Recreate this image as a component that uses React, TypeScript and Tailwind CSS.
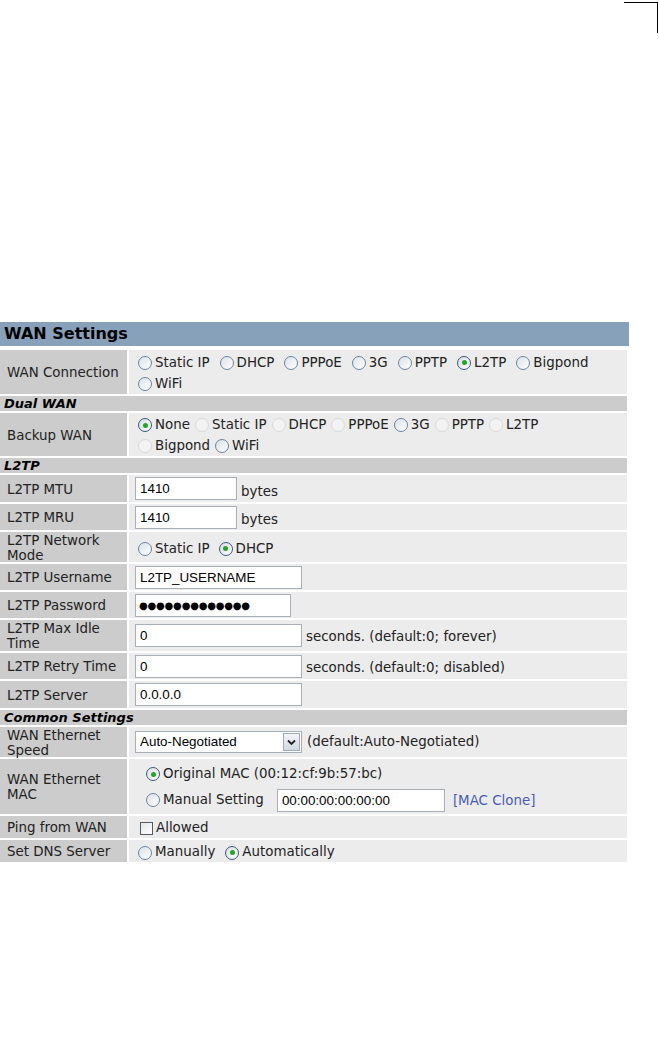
import React from 'react';

const Radio = ({ checked, disabled }: { checked?: boolean; disabled?: boolean }) => (
  <span
    className={`inline-flex h-[14px] w-[14px] shrink-0 items-center justify-center rounded-full border ${
      disabled
        ? 'border-[#dadada] bg-[#f3f3f3]'
        : checked
        ? 'border-[#3d5878] bg-gradient-to-br from-[#d9dee5] to-white'
        : 'border-[#6b84a2] bg-gradient-to-br from-[#dce1e7] to-white'
    }`}
  >
    {checked && <span className="h-[5px] w-[5px] rounded-full bg-[#24a524]" />}
  </span>
);

const Opt = ({ label, checked, disabled }: { label: string; checked?: boolean; disabled?: boolean }) => (
  <span className="inline-flex items-center gap-[3px] whitespace-nowrap">
    <Radio checked={checked} disabled={disabled} />
    {label}
  </span>
);

const TextBox = ({ value, w }: { value: string; w: string }) => (
  <input
    readOnly
    value={value}
    className={`${w} h-[23px] border border-[#a9afb8] bg-white px-[4px] text-[13.4px] text-black outline-none font-['Liberation_Sans',Arial,sans-serif]`}
  />
);

const Section = ({ title }: { title: string }) => (
  <div className="flex h-[15px] items-center bg-[#cccccc] px-[4px] text-[13px] font-bold italic leading-[15px] text-black">
    {title}
  </div>
);

const Row = ({ label, h, children, pl = 'pl-[9px]' }: { label: string; h: string; children: React.ReactNode; pl?: string }) => (
  <div className={`flex ${h} gap-[2px]`}>
    <div className="flex w-[127px] shrink-0 items-center bg-[#cccccc] pl-[7px] pr-[2px] pt-[1px] leading-[15px]">{label}</div>
    <div className={`flex flex-1 items-center bg-[#ececec] ${pl}`}>{children}</div>
  </div>
);

export default function App() {
  return (
    <div className="relative h-[1050px] w-[659px] bg-white pt-[322px] text-[13.4px] text-[#222] font-['DejaVu_Sans',Verdana,sans-serif]">
      {/* crop mark */}
      <div className="absolute left-[624px] top-[2px] h-[31px] w-[34px] border-r border-t border-black" />

      <div className="w-[629px]">
        <div className="flex h-[24px] items-center bg-[#88a1bb] px-[4px] text-[16px] font-bold text-black">
          WAN Settings
        </div>

        <div className="mt-[4px] flex w-[627px] flex-col gap-[2px]">
          <Row label="WAN Connection" h="h-[44px]">
            <div className="flex flex-col pt-[3px]">
              <div className="flex h-[21px] items-center gap-[10px]">
                <Opt label="Static IP" />
                <Opt label="DHCP" />
                <Opt label="PPPoE" />
                <Opt label="3G" />
                <Opt label="PPTP" />
                <Opt label="L2TP" checked />
                <Opt label="Bigpond" />
              </div>
              <div className="flex h-[21px] items-center">
                <Opt label="WiFi" />
              </div>
            </div>
          </Row>

          <Section title="Dual WAN" />

          <Row label="Backup WAN" h="h-[43px]">
            <div className="flex flex-col pt-[3px]">
              <div className="flex h-[21px] items-center gap-[5px]">
                <Opt label="None" checked />
                <Opt label="Static IP" disabled />
                <Opt label="DHCP" disabled />
                <Opt label="PPPoE" disabled />
                <Opt label="3G" />
                <Opt label="PPTP" disabled />
                <Opt label="L2TP" disabled />
              </div>
              <div className="flex h-[21px] items-center gap-[5px]">
                <Opt label="Bigpond" disabled />
                <Opt label="WiFi" />
              </div>
            </div>
          </Row>

          <Section title="L2TP" />

          <Row label="L2TP MTU" h="h-[27px]" pl="pl-[6px]">
            <TextBox value="1410" w="w-[102px]" />
            <span className="ml-[4px] pt-[7px]">bytes</span>
          </Row>
          <Row label="L2TP MRU" h="h-[26px]" pl="pl-[6px]">
            <TextBox value="1410" w="w-[102px]" />
            <span className="ml-[4px] pt-[7px]">bytes</span>
          </Row>
          <Row label="L2TP Network Mode" h="h-[30px]">
            <div className="flex gap-[9px] pt-[4px]">
              <Opt label="Static IP" />
              <Opt label="DHCP" checked />
            </div>
          </Row>
          <Row label="L2TP Username" h="h-[26px]" pl="pl-[6px]">
            <TextBox value="L2TP_USERNAME" w="w-[167px]" />
          </Row>
          <Row label="L2TP Password" h="h-[26px]" pl="pl-[6px]">
            <input
              readOnly
              value={'\u25CF'.repeat(13)}
              className="h-[23px] w-[156px] border border-[#a9afb8] bg-white px-[3px] text-[10px] tracking-[-0.2px] text-black outline-none font-['DejaVu_Sans',sans-serif]"
            />
          </Row>
          <Row label="L2TP Max Idle Time" h="h-[31px]" pl="pl-[6px]">
            <TextBox value="0" w="w-[167px]" />
            <span className="ml-[4px] pt-[4px]">seconds. (default:0; forever)</span>
          </Row>
          <Row label="L2TP Retry Time" h="h-[26px]" pl="pl-[6px]">
            <TextBox value="0" w="w-[167px]" />
            <span className="ml-[4px] pt-[4px]">seconds. (default:0; disabled)</span>
          </Row>
          <Row label="L2TP Server" h="h-[27px]" pl="pl-[6px]">
            <TextBox value="0.0.0.0" w="w-[167px]" />
          </Row>

          <Section title="Common Settings" />

          <Row label="WAN Ethernet Speed" h="h-[30px]" pl="pl-[6px]">
            <div className="flex h-[22px] w-[167px] items-center border border-[#a9afb8] bg-white pl-[4px] text-[13.4px] text-black font-['Liberation_Sans',Arial,sans-serif]">
              <span className="flex-1">Auto-Negotiated</span>
              <span className="mr-[1px] flex h-[18px] w-[17px] items-center justify-center border border-[#9eabbb] bg-gradient-to-b from-[#f2f4f7] to-[#d3d9e2]">
                <svg width="9" height="7" viewBox="0 0 9 7">
                  <path d="M1 1.5 L4.5 5 L8 1.5" fill="none" stroke="#222" strokeWidth="1.8" />
                </svg>
              </span>
            </div>
            <span className="ml-[5px] pt-[1px]">(default:Auto-Negotiated)</span>
          </Row>

          <Row label="WAN Ethernet MAC" h="h-[55px]" pl="pl-[17px]">
            <div className="flex flex-col gap-[3px]">
              <div className="flex h-[22px] items-center pt-[2px]">
                <Opt label="Original MAC (00:12:cf:9b:57:bc)" checked />
              </div>
              <div className="flex h-[24px] items-center pt-[2px]">
                <Opt label="Manual Setting" />
                <input
                  readOnly
                  value="00:00:00:00:00:00"
                  className="ml-[13px] h-[23px] w-[168px] border border-[#a9afb8] bg-white px-[4px] text-[13.4px] text-black outline-none font-['Liberation_Sans',Arial,sans-serif]"
                />
                <span className="ml-[8px] pt-[3px] text-[#4a5cb4]">[MAC Clone]</span>
              </div>
            </div>
          </Row>

          <Row label="Ping from WAN" h="h-[22px]" pl="pl-[11px]">
            <span className="inline-flex items-center gap-[3px] pt-[3px]">
              <span className="h-[13px] w-[13px] border border-[#555b63] bg-gradient-to-br from-[#e4e6ea] to-white" />
              Allowed
            </span>
          </Row>

          <Row label="Set DNS Server" h="h-[22px]">
            <div className="flex gap-[10px] pt-[3px]">
              <Opt label="Manually" />
              <Opt label="Automatically" checked />
            </div>
          </Row>
        </div>
      </div>
    </div>
  );
}
